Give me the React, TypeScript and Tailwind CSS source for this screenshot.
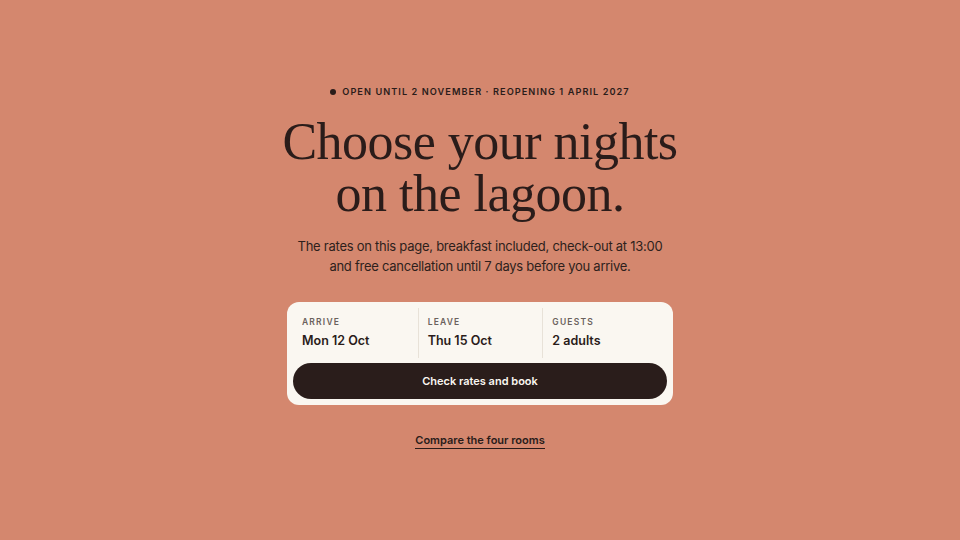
export default function App() {
    const fields = [
        { label: 'Arrive', value: 'Mon 12 Oct' },
        { label: 'Leave', value: 'Thu 15 Oct' },
        { label: 'Guests', value: '2 adults' },
    ];

    return (
        <div
            className="w-[960px] h-[540px] bg-[#d4876e] text-[#2a1c1a] flex flex-col items-center"
            style={{ fontFamily: 'Inter, "Noto Sans", sans-serif' }}
        >
            <div className="mt-[85px] flex items-center gap-[6px] text-[9.2px] font-semibold tracking-[0.115em] uppercase">
                <span className="w-[6px] h-[6px] rounded-full bg-[#2a1c1a]" />
                <span>Open until 2 November · Reopening 1 April 2027</span>
            </div>

            <h1
                className="mt-[17px] text-center text-[52px] leading-[52px] tracking-[-0.01em]"
                style={{ fontFamily: '"Liberation Serif", "DejaVu Serif", serif' }}
            >
                Choose your nights
                <br />
                on the lagoon.
            </h1>

            <p className="mt-[16px] text-center text-[13px] leading-[20px] tracking-[-0.02em] text-[#2e1f1c]">
                The rates on this page, breakfast included, check-out at 13:00
                <br />
                and free cancellation until 7 days before you arrive.
            </p>

            <div className="mt-[26px] w-[386px] bg-[#faf7f1] rounded-[12px] p-[6px]">
                <div className="grid grid-cols-3">
                    {fields.map((f, i) => (
                        <div
                            key={f.label}
                            className={`px-[9px] pt-[8px] h-[50px] ${i > 0 ? 'border-l border-[#e8e2d8]' : ''}`}
                        >
                            <div className="text-[8.5px] font-semibold uppercase tracking-[0.14em] text-[#6b625d]">
                                {f.label}
                            </div>
                            <div className="mt-[3px] text-[12.5px] font-semibold">{f.value}</div>
                        </div>
                    ))}
                </div>
                <button className="mt-[5px] w-full h-[36px] rounded-full bg-[#2a1d1b] text-[#faf7f1] text-[11px] font-semibold">
                    Check rates and book
                </button>
            </div>

            <a className="mt-[28px] text-[11px] font-semibold border-b border-[#2a1c1a] leading-[15px]">
                Compare the four rooms
            </a>
        </div>
    );
}
